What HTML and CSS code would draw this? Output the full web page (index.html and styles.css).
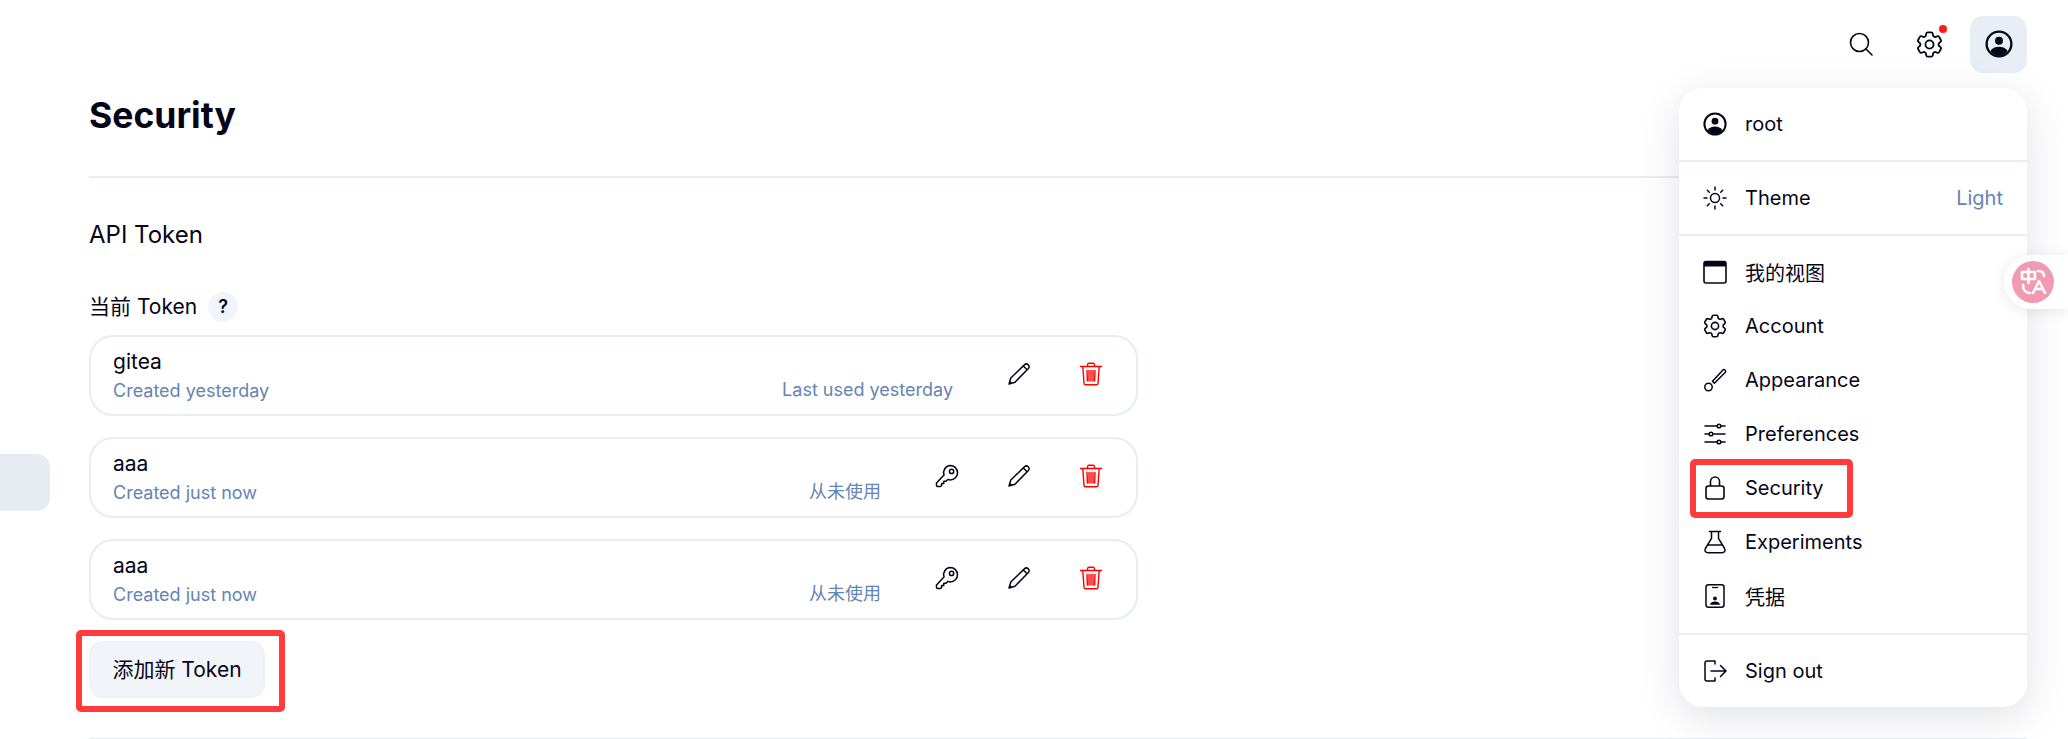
FILE: index.html
```html
<!DOCTYPE html>
<html lang="zh">
<head>
<meta charset="utf-8">
<title>Security</title>
<link rel="stylesheet" href="styles.css">
</head>
<body>
<svg class="defs" width="0" height="0" aria-hidden="true">
  <symbol id="i-user" viewBox="0 0 24 24">
    <circle cx="12" cy="12" r="10.600" fill="none" stroke="currentColor" stroke-width="2"/>
    <circle cx="12" cy="9.200" r="3.400" fill="currentColor"/>
    <path d="M4.600 18.200C6 15.600 8.800 14.400 12 14.400s6 1.200 7.400 3.800C17.600 20.600 15 22 12 22s-5.600-1.400-7.400-3.800Z" fill="currentColor"/>
  </symbol>
  <symbol id="i-gear" viewBox="2 2 20 20">
    <path fill="none" stroke="currentColor" stroke-width="1.350" stroke-linejoin="round" d="M9.594 3.940c.09-.542.56-.94 1.110-.94h2.593c.55 0 1.020.398 1.110.94l.213 1.281c.063.374.313.686.645.870.074.040.147.083.22.127.325.196.72.257 1.075.124l1.217-.456a1.125 1.125 0 0 1 1.370.49l1.296 2.247a1.125 1.125 0 0 1-.26 1.431l-1.003.827c-.293.241-.438.613-.43.992a7.723 7.723 0 0 1 0 .255c-.008.378.137.75.43.991l1.004.827c.424.35.534.955.26 1.430l-1.298 2.247a1.125 1.125 0 0 1-1.369.491l-1.217-.456c-.355-.133-.75-.072-1.076.124a6.470 6.470 0 0 1-.22.128c-.331.183-.581.495-.644.869l-.213 1.281c-.09.543-.56.94-1.110.94h-2.594c-.55 0-1.019-.398-1.110-.94l-.213-1.281c-.062-.374-.312-.686-.644-.87a6.520 6.520 0 0 1-.22-.127c-.325-.196-.72-.257-1.076-.124l-1.217.456a1.125 1.125 0 0 1-1.369-.49l-1.297-2.247a1.125 1.125 0 0 1 .26-1.431l1.004-.827c.292-.24.437-.613.43-.991a6.932 6.932 0 0 1 0-.255c.007-.38-.138-.751-.43-.992l-1.004-.827a1.125 1.125 0 0 1-.26-1.430l1.297-2.247a1.125 1.125 0 0 1 1.370-.491l1.216.456c.356.133.751.072 1.076-.124.072-.044.146-.086.22-.128.332-.183.582-.495.644-.869l.214-1.280Z"/>
    <circle cx="12" cy="12" r="3" fill="none" stroke="currentColor" stroke-width="1.350"/>
  </symbol>
  <symbol id="i-pencil" viewBox="0 0 24 24">
    <path fill="none" stroke="currentColor" stroke-width="1.500" stroke-linejoin="round" d="M2 22l1.800-6L17.600 2.600a2.700 2.700 0 0 1 3.800 3.800L8 20.200Z"/>
    <path fill="none" stroke="currentColor" stroke-width="1.500" d="M16.300 4l3.800 3.800"/>
    <path fill="currentColor" d="M2 22l.9-3.200 2.300 2.300Z"/>
  </symbol>
  <symbol id="i-trash" viewBox="0 0 24 24">
    <path fill="none" stroke="currentColor" stroke-width="1.400" stroke-linejoin="round" stroke-linecap="round" d="M1.500 4.500h21M8.500 4.500V2.800A1.500 1.500 0 0 1 10 1.300h4a1.500 1.500 0 0 1 1.500 1.500v1.700M3.800 4.500 5 21.200A1.700 1.700 0 0 0 6.700 22.800h10.600a1.700 1.700 0 0 0 1.700-1.600l1.200-16.700M8 8.500l.4 10.500M12 8.500V19M16 8.500 15.600 19M10 8.500v10.500M14 8.500V19"/>
  </symbol>
  <symbol id="i-key" viewBox="0 0 24 24">
    <path fill="none" stroke="currentColor" stroke-width="1.500" stroke-linejoin="round" d="M15.300 1.500a7.200 7.200 0 0 1 0 14.400c-.9 0-1.700-.2-2.500-.5l-1.800 1.900H8.800v2.200H6.600v2.200l-1.500.9H2.800a1.200 1.200 0 0 1-1.300-1.300v-2.200L9 11.100a7.200 7.200 0 0 1 6.300-9.600Z"/>
    <circle cx="16.600" cy="7.400" r="2.100" fill="none" stroke="currentColor" stroke-width="1.500"/>
  </symbol>
  <symbol id="i-sun" viewBox="0 0 24 24">
    <g fill="none" stroke="currentColor" stroke-width="1.500" stroke-linecap="round">
      <circle cx="12" cy="12" r="4.500"/>
      <path d="M12 1v3M12 20v3M1 12h3M20 12h3M4.300 4.300l2 2M17.700 17.700l2 2M4.300 19.700l2-2M17.700 6.300l2-2"/>
    </g>
  </symbol>
  <symbol id="i-window" viewBox="0 0 24 24">
    <rect x="1" y="1.500" width="22" height="21.500" rx="2" fill="none" stroke="currentColor" stroke-width="1.600"/>
    <path d="M1 3A1.500 1.500 0 0 1 2.500 1.500h19A1.500 1.500 0 0 1 23 3V6.500H1Z" fill="currentColor"/>
  </symbol>
  <symbol id="i-brush" viewBox="0 0 24 24">
    <g fill="none" stroke="currentColor" stroke-width="1.500" stroke-linejoin="round">
      <path d="M9.500 13.200 20.200 1.800a1.700 1.700 0 0 1 2.200 2.400L11.400 15.300Z"/>
      <circle cx="5.500" cy="19" r="3.700"/>
    </g>
  </symbol>
  <symbol id="i-sliders" viewBox="0 0 24 24">
    <g fill="none" stroke="currentColor" stroke-width="1.500" stroke-linecap="round">
      <path d="M2 4h12M18 4h4M2 12h4M10 12h12M2 20h12M18 20h4"/>
      <circle cx="16" cy="4" r="1.800"/>
      <circle cx="8" cy="12" r="1.800"/>
      <circle cx="16" cy="20" r="1.800"/>
    </g>
  </symbol>
  <symbol id="i-lock" viewBox="0 0 24 24">
    <g fill="none" stroke="currentColor" stroke-width="1.600" stroke-linejoin="round">
      <rect x="3" y="10" width="18" height="13" rx="2.500"/>
      <path d="M7.500 10V5.500a4.500 4.500 0 0 1 9 0V10"/>
    </g>
  </symbol>
  <symbol id="i-flask" viewBox="0 0 24 24">
    <path fill="none" stroke="currentColor" stroke-width="1.500" stroke-linejoin="round" stroke-linecap="round" d="M6.500 1.500h11M8.500 1.500v6.800L2.400 18.500C1.200 20.700 2.500 22.800 5 22.800h14c2.500 0 3.800-2.100 2.600-4.300L15.500 8.300V1.500M5 15h14"/>
  </symbol>
  <symbol id="i-phone" viewBox="0 0 24 24">
    <rect x="3" y=".8" width="18" height="22.400" rx="2.500" fill="none" stroke="currentColor" stroke-width="1.500"/>
    <path d="M9 3.500h6" stroke="currentColor" stroke-width="1.300" fill="none"/>
    <circle cx="12" cy="14.500" r="1.900" fill="currentColor"/>
    <path d="M7 20.800c.4-2 2.500-3.200 5-3.200s4.600 1.200 5 3.200Z" fill="currentColor"/>
  </symbol>
  <symbol id="i-logout" viewBox="0 0 24 24">
    <path fill="none" stroke="currentColor" stroke-width="1.500" stroke-linecap="round" stroke-linejoin="round" d="M12 2H4a2 2 0 0 0-2 2v16a2 2 0 0 0 2 2h8M8 12h15M17.500 6.500 23 12l-5.500 5.500M12 2v3M12 19v3"/>
  </symbol>
</svg>

<div class="page">
  <aside class="side"><div class="side-tab"></div></aside>
  <div class="content">
    <header class="topbar">
      <button class="top-btn" type="button" aria-label="Search">
        <svg class="icon" viewBox="0 0 24 24"><g fill="none" stroke="currentColor" stroke-width="1.600" stroke-linecap="round"><circle cx="10.500" cy="10.500" r="9"/><path d="m17 17 6 6"/></g></svg>
      </button>
      <button class="top-btn has-dot" type="button" aria-label="Settings">
        <svg class="icon gear"><use href="#i-gear"/></svg>
      </button>
      <button class="top-btn is-active" type="button" aria-label="User">
        <svg class="icon user"><use href="#i-user"/></svg>
      </button>
    </header>

    <main class="main">
      <h1 class="title">Security</h1>
      <hr class="rule">
      <h2 class="section">API Token</h2>
      <div class="label">当前 Token <span class="help">?</span></div>

      <ul class="tokens">
        <li class="token">
          <div class="token-info">
            <div class="token-name">gitea</div>
            <div class="muted">Created yesterday</div>
          </div>
          <div class="muted token-used">Last used yesterday</div>
          <div class="actions">
            <span class="action"><svg class="icon"><use href="#i-pencil"/></svg></span>
            <span class="action danger"><svg class="icon"><use href="#i-trash"/></svg></span>
          </div>
        </li>
        <li class="token">
          <div class="token-info">
            <div class="token-name">aaa</div>
            <div class="muted">Created just now</div>
          </div>
          <div class="muted token-used">从未使用</div>
          <div class="actions">
            <span class="action"><svg class="icon"><use href="#i-key"/></svg></span>
            <span class="action"><svg class="icon"><use href="#i-pencil"/></svg></span>
            <span class="action danger"><svg class="icon"><use href="#i-trash"/></svg></span>
          </div>
        </li>
        <li class="token">
          <div class="token-info">
            <div class="token-name">aaa</div>
            <div class="muted">Created just now</div>
          </div>
          <div class="muted token-used">从未使用</div>
          <div class="actions">
            <span class="action"><svg class="icon"><use href="#i-key"/></svg></span>
            <span class="action"><svg class="icon"><use href="#i-pencil"/></svg></span>
            <span class="action danger"><svg class="icon"><use href="#i-trash"/></svg></span>
          </div>
        </li>
      </ul>

      <div class="add-wrap">
        <button class="add-btn" type="button">添加新 Token</button>
        <span class="mark mark-add"></span>
      </div>
      <hr class="rule rule-end">
    </main>
  </div>
</div>

<nav class="menu">
  <div class="menu-head">
    <svg class="icon"><use href="#i-user"/></svg><span>root</span>
  </div>
  <div class="menu-head">
    <svg class="icon"><use href="#i-sun"/></svg><span>Theme</span><span class="muted theme-val">Light</span>
  </div>
  <div class="menu-list">
    <a class="menu-item"><svg class="icon"><use href="#i-window"/></svg><span>我的视图</span></a>
    <a class="menu-item"><svg class="icon"><use href="#i-gear"/></svg><span>Account</span></a>
    <a class="menu-item"><svg class="icon"><use href="#i-brush"/></svg><span>Appearance</span></a>
    <a class="menu-item"><svg class="icon"><use href="#i-sliders"/></svg><span>Preferences</span></a>
    <a class="menu-item"><svg class="icon"><use href="#i-lock"/></svg><span>Security</span><span class="mark mark-sec"></span></a>
    <a class="menu-item"><svg class="icon"><use href="#i-flask"/></svg><span>Experiments</span></a>
    <a class="menu-item"><svg class="icon"><use href="#i-phone"/></svg><span>凭据</span></a>
  </div>
  <div class="menu-foot">
    <svg class="icon"><use href="#i-logout"/></svg><span>Sign out</span>
  </div>
</nav>

<div class="translate">
  <span class="translate-dot">
    <svg viewBox="0 0 42 42" width="42" height="42"><g fill="none" stroke="#fff" stroke-width="2.600" stroke-linecap="round" stroke-linejoin="round"><path d="M10 11h13v7H10ZM16.500 8v14M26 10c3 0 6 1 6 5M11 24c0 5 3 8 7 8M21 32l6-12 6 12M23.500 28h7"/></g></svg>
  </span>
</div>
</body>
</html>
```

FILE: styles.css
```css
* { box-sizing: border-box; }
html, body { margin: 0; padding: 0; }
body {
  width: 2068px;
  height: 739px;
  overflow: hidden;
  position: relative;
  background: #fff;
  color: #050518;
  font-family: Inter, "Noto Sans CJK SC", sans-serif;
  font-size: 21px;
}
.defs { position: absolute; }
.icon { width: 24px; height: 24px; display: block; flex: none; }

.page { display: flex; height: 739px; }
.side { width: 89px; flex: none; padding-top: 454px; }
.side-tab {
  width: 50px;
  height: 57px;
  background: #e7ecf3;
  border-radius: 0 13px 13px 0;
}
.content { flex: 1; display: flex; flex-direction: column; padding-right: 41px; }

.topbar {
  display: flex;
  justify-content: flex-end;
  gap: 12px;
  padding-top: 16px;
}
.top-btn {
  width: 57px;
  height: 57px;
  border: 0;
  padding: 0 0 1px;
  background: transparent;
  color: inherit;
  border-radius: 13px;
  display: flex;
  align-items: center;
  justify-content: center;
  position: relative;
}
.top-btn .gear { width: 27px; height: 27px; }
.top-btn .user { width: 28px; height: 28px; }
.top-btn.is-active { background: #e9edf5; }
.top-btn.has-dot::after {
  content: "";
  position: absolute;
  top: 9px;
  left: 38px;
  width: 8px;
  height: 8px;
  border-radius: 50%;
  background: #ff1a1a;
}

.title {
  margin: 17px 0 0;
  font-size: 35.5px;
  line-height: 52px;
  font-weight: 700;
}
.rule { margin: 34px 0 0; border: 0; height: 2px; background: #e8edf4; }
.section {
  margin: 42px 0 0;
  font-size: 24px;
  line-height: 30px;
  font-weight: 400;
}
.label {
  margin-top: 42px;
  line-height: 30px;
  display: flex;
  align-items: center;
  gap: 11px;
}
.help {
  width: 30px;
  height: 30px;
  border-radius: 50%;
  background: #f1f4f8;
  font-size: 18px;
  font-weight: 600;
  display: flex;
  align-items: center;
  justify-content: center;
}

.tokens {
  list-style: none;
  margin: 13px 0 0;
  padding: 0;
  width: 1049px;
  display: flex;
  flex-direction: column;
  gap: 21px;
}
.token {
  height: 81px;
  border: 2px solid #e8edf4;
  border-radius: 24px;
  padding: 0 9px 0 22px;
  display: flex;
  align-items: center;
}
.token-info { flex: 1; }
.token-name { line-height: 29px; }
.muted { color: #6484b3; }
.token-info .muted { line-height: 29px; font-size: 18px; }
.token-used {
  font-size: 18px;
  line-height: 29px;
  align-self: flex-end;
  margin: 0 30px 10px 0;
}
.actions { display: flex; }
.action {
  width: 72px;
  height: 54px;
  display: flex;
  align-items: center;
  justify-content: center;
  margin-top: -4px;
}
.danger { color: #f00; }

.add-wrap {
  position: relative;
  width: 176px;
  margin-top: 21px;
}
.add-btn {
  display: block;
  width: 176px;
  height: 57px;
  border: 2px solid #eef1f6;
  border-radius: 14px;
  background: #f1f4f8;
  font: inherit;
  color: inherit;
  padding: 0 0 4px;
}
.mark {
  position: absolute;
  border: 6px solid #ff3b3b;
  border-radius: 5px;
  pointer-events: none;
}
.mark-add { inset: -11px -20px -14px -13px; }
.rule-end { margin-top: 40px; }

.menu {
  position: absolute;
  left: 1679px;
  top: 88px;
  width: 348px;
  height: 619px;
  background: #fff;
  border-radius: 24px;
  box-shadow: 0 10px 40px rgba(20, 30, 60, 0.13);
  display: flex;
  flex-direction: column;
  font-size: 20px;
}
.menu-head {
  height: 74px;
  flex: none;
  padding: 0 24px;
  border-bottom: 2px solid #e8edf4;
  display: flex;
  align-items: center;
  gap: 18px;
}
.theme-val { margin-left: auto; }
.menu-list {
  padding: 9px 0 10px;
  border-bottom: 2px solid #e8edf4;
}
.menu-item {
  position: relative;
  height: 54px;
  padding: 0 24px;
  display: flex;
  align-items: center;
  gap: 18px;
}
.mark-sec { left: 11px; top: -2px; width: 163px; height: 59px; }
.menu-foot {
  flex: 1;
  padding: 0 24px;
  display: flex;
  align-items: center;
  gap: 18px;
}

.translate {
  position: absolute;
  left: 2004px;
  top: 255px;
  width: 64px;
  height: 54px;
  background: #fff;
  border-radius: 27px 0 0 27px;
  box-shadow: 0 2px 14px rgba(20, 30, 60, 0.1);
  padding: 6px 0 0 8px;
}
.translate-dot {
  display: block;
  width: 42px;
  height: 42px;
  border-radius: 50%;
  background: #f29ab2;
}
```
